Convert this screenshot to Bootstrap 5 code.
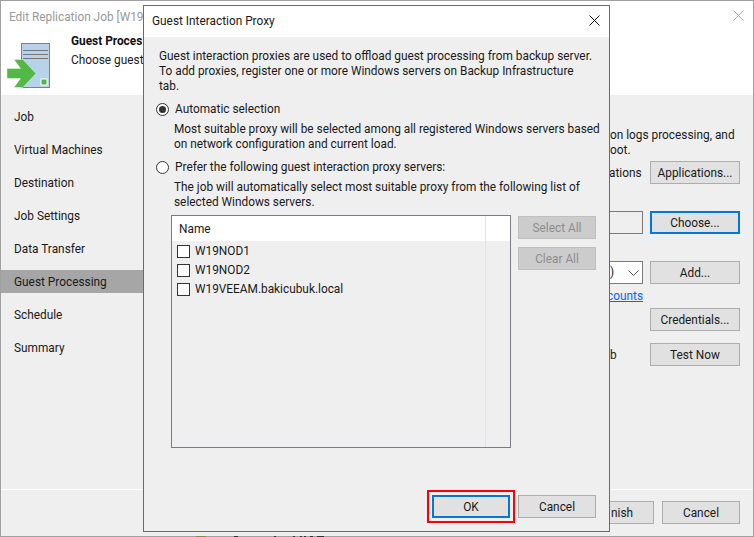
<!DOCTYPE html>
<html lang="en">
<head>
<meta charset="utf-8">
<title>Guest Interaction Proxy</title>
<link rel="stylesheet" href="https://cdn.jsdelivr.net/npm/bootstrap@5.3.0/dist/css/bootstrap.min.css">
<style>
html,body{margin:0;height:537px;overflow:hidden;background:#efefef}
body,.desk{font-family:Roboto,"Open Sans",sans-serif;font-size:11.85px;line-height:15px;color:#1a1a1a}
.desk{position:relative;width:754px;height:537px;overflow:hidden;white-space:nowrap}
.backwin{width:754px;height:536px;background:#efefef;border:1px solid #a0a0a0;border-bottom:0}
.edge{position:absolute;left:0;right:0;top:536px;height:1px;background:#a0a0a0}
.backtitle{height:94px;background:#fff}
.wintitle{color:#999;padding:9px 0 0 8px;height:33px}
.headrow{padding-left:6px;gap:20px}
.headicon{margin-top:9px;flex:none}
.headlabel{font-weight:700;color:#111;margin-bottom:4px}
.sidenav{width:142px;padding-top:10px}
.sideitem{height:23px;padding:5px 0 0 13px;margin-bottom:10px}
.sideitem.cur{background:#a6a6a6}
.over{position:absolute}
.dialog{position:absolute;left:143px;top:5px;width:467px;height:527px;background:#efefef;border:1px solid #6a6a6a}
.dlgtitle{height:31px;background:#fff;padding:8px 0 0 8px}
.dlgbody{padding:12px 15px 0 15px}
.intro{margin:0 0 7px 0}
.radiorow{gap:6px;height:17px}
.radiodot{width:13px;height:13px;flex:none;border:1px solid #333;border-radius:50%;background:#fff;display:flex;align-items:center;justify-content:center;margin-left:-3px}
.radiodot i{width:7px;height:7px;border-radius:50%;background:#333;display:block}
.radiohelp{padding-left:15px;margin:4px 0 7px 0}
.radiohelp.tight{margin-bottom:5px}
.listzone{gap:7px;padding-left:12px}
.listbox{width:340px;height:233px;flex:none;border:1px solid #7c7c84;position:relative}
.listhead{height:25px;background:#fff;padding:6px 0 0 7px;margin-bottom:1px}
.vsep{position:absolute;left:313px;top:0;bottom:0;width:1px;background:#e3e3e8}
.listrow{height:19px;gap:5px;padding-left:5px}
.tick{width:13px;height:13px;border:1px solid #333;background:#fff;flex:none}
.listbtns{gap:8px;padding-top:1px}
.winbtn{width:90px;height:23px;padding:2px 0 0 0;background:#e1e1e1;border:1px solid #adadad;border-radius:0;font-size:11.85px;line-height:19px;color:#1a1a1a;font-family:inherit;display:block;text-align:center}
.winbtn.off{width:78px;background:#ccc;color:#8c8c8c;border-color:#bfbfbf}
.winbtn.focusb{border:2px solid #0078d7;line-height:17px}
.okwrap{position:absolute;left:283px;top:484px;border:2px solid #f00;padding:3px;line-height:0}
.okwrap .winbtn{width:78px}
.dlgcancel{position:absolute;left:374px;top:489px;width:78px}
.footrule{position:absolute;left:1px;right:1px;top:489px;height:1px;background:#fff}
.lnk{color:#0066ff}
</style>
</head>
<body>
<div class="desk">
  <div class="backwin d-flex flex-column">
    <div class="backtitle">
      <div class="wintitle">Edit Replication Job [W19</div>
      <div class="headrow d-flex">
        <svg class="headicon" width="44" height="46" viewBox="0 0 44 46"><rect x="14.500" y="0.500" width="28" height="44" fill="#b8d2ec" stroke="#808080"/><path d="M16 7.500h25M16 11.500h25M16 15.500h25" stroke="#777" fill="none"/><rect x="34" y="36" width="6" height="6" fill="#4cb748" stroke="#fff"/><path d="M0 26h13.500L7 17h9l13 14-13 14H7l6.500-9H0z" transform="translate(0 -.5)" fill="#52b848" stroke="#fff" stroke-width=".4"/></svg>
        <div><div class="headlabel">Guest Proces</div><div>Choose guest</div></div>
      </div>
    </div>
    <div class="sidenav">
      <div class="sideitem">Job</div>
      <div class="sideitem">Virtual Machines</div>
      <div class="sideitem">Destination</div>
      <div class="sideitem">Job Settings</div>
      <div class="sideitem">Data Transfer</div>
      <div class="sideitem cur">Guest Processing</div>
      <div class="sideitem">Schedule</div>
      <div class="sideitem">Summary</div>
    </div>
  </div>
  <div class="edge"></div>
  <svg class="over" style="left:190px;top:536px" width="140" height="1" viewBox="0 0 140 1"><path d="M6 .5h10" stroke="#6a9a3a"/><path d="M44 .5h4M84 .5h2M103 .5h2M110 .5h2M114 .5h2M120 .5h3M127 .5h4M131 .5h3" stroke="#333"/></svg>
  <div class="footrule"></div>
  <svg class="over" style="left:733px;top:10px" width="11" height="11" viewBox="0 0 11 11"><path d="M.5.500l10 10M10.500.500l-10 10" stroke="#aaa" fill="none"/></svg>
  <div class="over" style="left:610px;top:128px">on logs processing, and<br>oot.</div>
  <div class="over" style="left:609px;top:166px">ations</div>
  <button class="winbtn over" style="left:650px;top:161px">Applications...</button>
  <div class="over" style="left:609px;top:211px;width:34px;height:23px;border:1px solid #7a7a7a;border-left:0"></div>
  <button class="winbtn focusb over" style="left:650px;top:211px">Choose...</button>
  <div class="over d-flex align-items-center" style="left:609px;top:261px;width:34px;height:23px;background:#fff;border:1px solid #7a7a7a;border-left:0;gap:14px;padding-left:1px">)<svg width="11" height="6" viewBox="0 0 11 6"><path d="M.5.500l5 5 5-5" stroke="#555" fill="none"/></svg></div>
  <button class="winbtn over" style="left:650px;top:261px">Add...</button>
  <a class="over lnk" href="#" style="left:607px;top:289px">counts</a>
  <button class="winbtn over" style="left:650px;top:308px">Credentials...</button>
  <div class="over" style="left:610px;top:348px">b</div>
  <button class="winbtn over" style="left:650px;top:343px">Test Now</button>
  <button class="winbtn over" style="left:609px;top:501px;width:45px;text-align:left;padding-left:1px">nish</button>
  <button class="winbtn over" style="left:662px;top:501px;width:78px">Cancel</button>

  <div class="dialog">
    <div class="dlgtitle">Guest Interaction Proxy</div>
    <svg class="over" style="right:9px;top:9px" width="11" height="11" viewBox="0 0 11 11"><path d="M.5.500l10 10M10.500.500l-10 10" stroke="#111" fill="none"/></svg>
    <div class="dlgbody">
      <p class="intro">Guest interaction proxies are used to offload guest processing from backup server.<br>To add proxies, register one or more Windows servers on Backup Infrastructure<br>tab.</p>
      <div class="radiorow d-flex align-items-center"><span class="radiodot"><i></i></span>Automatic selection</div>
      <p class="radiohelp">Most suitable proxy will be selected among all registered Windows servers based<br>on network configuration and current load.</p>
      <div class="radiorow d-flex align-items-center"><span class="radiodot"></span>Prefer the following guest interaction proxy servers:</div>
      <p class="radiohelp tight">The job will automatically select most suitable proxy from the following list of<br>selected Windows servers.</p>
      <div class="listzone d-flex">
        <div class="listbox">
          <div class="listhead">Name</div>
          <div class="vsep"></div>
          <div class="listrow d-flex align-items-center"><span class="tick"></span>W19NOD1</div>
          <div class="listrow d-flex align-items-center"><span class="tick"></span>W19NOD2</div>
          <div class="listrow d-flex align-items-center"><span class="tick"></span>W19VEEAM.bakicubuk.local</div>
        </div>
        <div class="listbtns d-flex flex-column">
          <button class="winbtn off" disabled>Select All</button>
          <button class="winbtn off" disabled>Clear All</button>
        </div>
      </div>
    </div>
    <div class="okwrap"><button class="winbtn focusb">OK</button></div>
    <button class="winbtn dlgcancel">Cancel</button>
  </div>
</div>
</body>
</html>
